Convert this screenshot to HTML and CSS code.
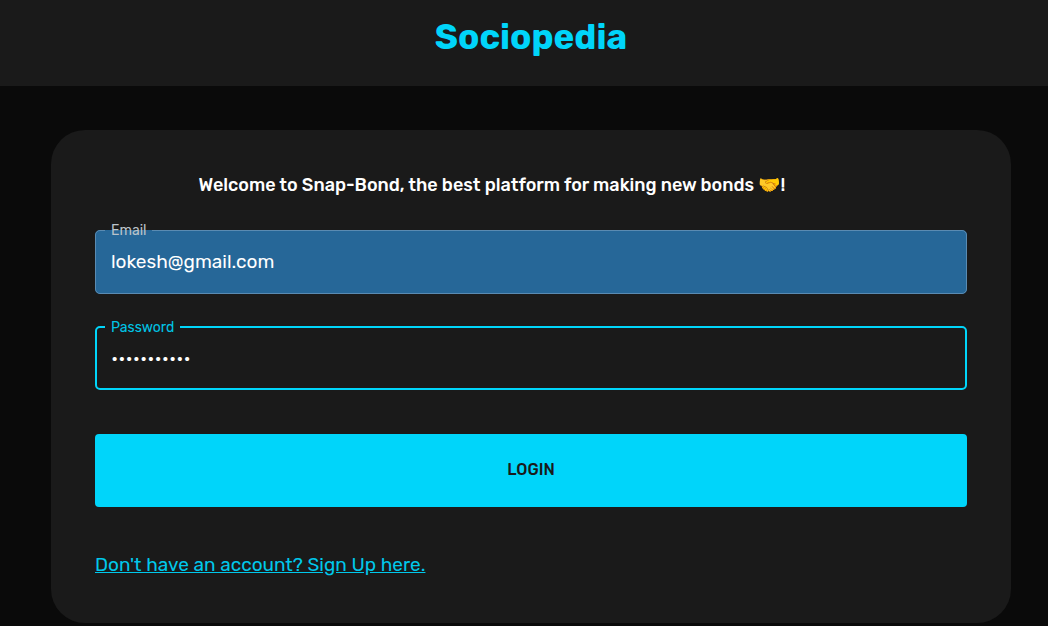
FILE: index.html
```
<!DOCTYPE html>
<html lang="en">
<head>
<meta charset="utf-8">
<meta name="viewport" content="width=device-width, initial-scale=1">
<title>Sociopedia</title>
<link rel="stylesheet" href="styles.css">
</head>
<body>
<header class="header"><h1 class="brand">Sociopedia</h1></header>
<main class="main">
  <section class="card">
    <h2 class="welcome">Welcome to Snap-Bond, the best platform for making new bonds 🤝!</h2>
    <form class="form">
      <fieldset class="field field-filled">
        <legend class="notch"><label for="email">Email</label></legend>
        <input class="input" id="email" type="email" value="lokesh@gmail.com">
      </fieldset>
      <fieldset class="field field-active">
        <legend class="notch"><label for="password">Password</label></legend>
        <input class="input" id="password" type="password" value="password123">
      </fieldset>
      <button class="login" type="submit">LOGIN</button>
      <a class="signup" href="#">Don't have an account? Sign Up here.</a>
    </form>
  </section>
</main>
</body>
</html>
```
FILE: styles.css
```
* { box-sizing: border-box; }
body {
  margin: 0;
  background: #0a0a0a;
  color: #fff;
  font-family: Rubik, Inter, "Noto Color Emoji", sans-serif;
}
.header {
  padding: 16px 37px 28px 51px;
  background: #1a1a1a;
  text-align: center;
}
.brand {
  margin: 0;
  color: #00d5fa;
  font-size: 35px;
  line-height: 42px;
  font-weight: 700;
}
.main { padding: 44px 37px 3px 51px; }
.card {
  padding: 44px;
  border-radius: 34px;
  background: #1a1a1a;
}
.welcome {
  margin: 0 78px 24px 0;
  font-size: 18px;
  line-height: 23px;
  font-weight: 500;
  text-align: center;
}
.form { display: flex; flex-direction: column; align-items: stretch; }
.field {
  min-width: 0;
  margin: 0 0 24px;
  padding: 0 9px;
  border: 1px solid #5a8bb2;
  border-radius: 5px;
}
.field-filled { background: #266798; color: #bac3ca; }
.field-active { border: 2px solid #00d5fa; padding: 0 8px; color: #00c4e6; margin-bottom: 44px; }
.notch { padding: 2px 6px 0; font-size: 14px; line-height: 16px; }
.input {
  display: block;
  width: 100%;
  height: 53px;
  margin: 0 0 1px;
  padding: 0 6px 8px;
  border: 0;
  outline: 0;
  background: transparent;
  color: #fff;
  font-family: inherit;
  font-size: 19px;
}
.field-active .input { height: 52px; margin: 0; }
.login {
  height: 73px;
  padding: 0 16px 2px;
  border: 0;
  border-radius: 4px;
  background: #00d5fa;
  color: #1a1a1a;
  font-family: inherit;
  font-size: 16px;
  font-weight: 500;
}
.signup {
  align-self: flex-start;
  margin-top: 44px;
  color: #00c8eb;
  font-size: 19px;
  line-height: 28px;
  text-decoration: underline;
}
```
